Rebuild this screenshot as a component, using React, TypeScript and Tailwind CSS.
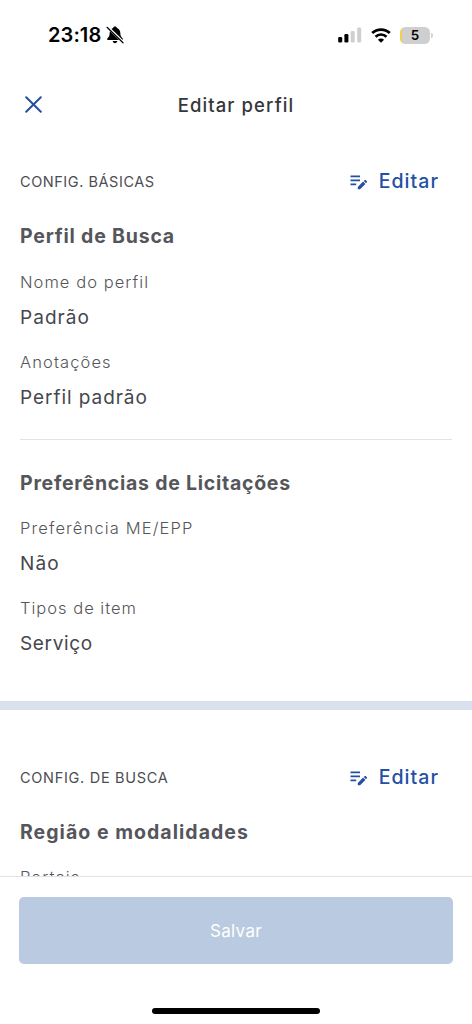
import React from "react";

interface FieldProps {
  label: string;
  value?: string;
  labelClass?: string;
  valueClass?: string;
}

const Field: React.FC<FieldProps> = ({ label, value, labelClass = "", valueClass = "" }) => {
  return (
    <div>
      <p className={`text-[16.5px] leading-6 font-light text-[#55565b] ${labelClass}`}>
        {label}
      </p>
      {value && (
        <p className={`mt-3 text-[19px] leading-6 text-[#46474c] ${valueClass}`}>
          {value}
        </p>
      )}
    </div>
  );
};

// Three lines with a pencil over the lower right corner
const EditIcon: React.FC = () => (
  <svg width="18" height="16" viewBox="0 0 18 16" fill="none">
    <path d="M0.5 2.3H10M0.5 6.3H10M0.5 10.3H6.2" stroke="#2450a4" strokeWidth="1.8" />
    <path d="M7.8 15.2V12.9L13.1 7.6L15.4 9.9L10.1 15.2Z" fill="#2450a4" />
    <path d="M13.8 7L14.7 6.1Q15.2 5.7 15.7 6.1L16.9 7.3Q17.3 7.8 16.9 8.3L16 9.2Z" fill="#2450a4" />
  </svg>
);

const SectionHeader: React.FC<{ title: string; className?: string }> = ({ title, className = "" }) => {
  return (
    <div className="flex h-10 items-center justify-between pr-[13px]">
      <h2 className={`text-[14.5px] text-[#4c4d52] ${className}`}>{title}</h2>
      <button className="flex items-center gap-[11px]">
        <EditIcon />
        <span className="text-[19.5px] font-medium tracking-[1.05px] text-[#2450a4]">
          Editar
        </span>
      </button>
    </div>
  );
};

const StatusBar: React.FC = () => {
  return (
    <div className="flex h-[70px] shrink-0 items-center justify-between pr-[39px] pl-12">
      <div className="flex items-center gap-[5px]">
        <span className="text-[20px] font-semibold tracking-[0.1px] text-black">23:18</span>
        <svg width="18" height="18" viewBox="0 0 18 18">
          <path
            d="M9 0.5C8 0.5 7.3 1.1 7.1 1.9C4.9 2.7 3.7 4.5 3.7 6.8C3.7 9.8 2.8 11 1.5 12.3C0.8 13 1 14 2 14H16C17 14 17.2 13 16.5 12.3C15.2 11 14.3 9.8 14.3 6.8C14.3 4.5 13.1 2.7 10.9 1.9C10.7 1.1 10 0.5 9 0.5ZM6.7 15H11.3C11.1 16.4 10.2 17.2 9 17.2C7.8 17.2 6.9 16.4 6.7 15Z"
            fill="#000"
          />
          <path d="M1.6 1L17.4 16.4" stroke="#fff" strokeWidth="2.6" />
          <path d="M1 1.3L17 16.8" stroke="#000" strokeWidth="1.2" strokeLinecap="round" />
        </svg>
      </div>
      <div className="flex items-center">
        <svg width="24" height="16" viewBox="0 0 24 16">
          <rect x="0.2" y="10" width="4" height="5.5" rx="1.2" fill="#000" />
          <rect x="6.4" y="7" width="4" height="8.5" rx="1.2" fill="#000" />
          <rect x="12.7" y="4" width="4" height="11.5" rx="1.2" fill="#cfcfcf" />
          <rect x="19.2" y="0.5" width="4" height="15" rx="1.2" fill="#cfcfcf" />
        </svg>
        <svg className="ml-[9px]" width="20" height="15" viewBox="0 0 20 15" fill="none">
          <path d="M1.2 5.1C6.1 0.4 13.9 0.4 18.8 5.1" stroke="#000" strokeWidth="2.8" />
          <path d="M4.5 8.7C7.6 5.8 12.4 5.8 15.5 8.7" stroke="#000" strokeWidth="2.6" />
          <path d="M10 14.8L6.9 11.8C8.7 10.2 11.3 10.2 13.1 11.8Z" fill="#000" />
        </svg>
        <div className="ml-[9px] flex h-[17px] w-[30px] items-center justify-center overflow-hidden rounded-[5.5px] bg-[linear-gradient(to_right,#f0cf4e_2.5px,#cfcfcf_2.5px)]">
          <span className="text-[13.5px] font-semibold text-black">5</span>
        </div>
        <div className="ml-px h-[5px] w-[2px] rounded-r-full bg-[#d2d2d2]" />
      </div>
    </div>
  );
};

const App: React.FC = () => {
  return (
    <div className="flex h-[1024px] w-[472px] flex-col overflow-hidden bg-white font-['Inter',sans-serif]">
      <StatusBar />

      <header className="grid h-[70px] shrink-0 grid-cols-[1fr_auto_1fr] items-center px-[25px]">
        <button aria-label="Fechar" className="pb-[2px]">
          <svg width="17" height="17" viewBox="0 0 17 17" fill="none">
            <path d="M1.2 1.2L15.8 15.8M15.8 1.2L1.2 15.8" stroke="#2450a4" strokeWidth="2" strokeLinecap="round" />
          </svg>
        </button>
        <h1 className="pt-px text-[18.5px] font-medium tracking-[1.1px] text-[#36373b]">Editar perfil</h1>
        <span />
      </header>

      <main className="min-h-0 flex-1 overflow-hidden">
        <section className="h-[561px] px-5 pt-[22px]">
          <SectionHeader title="CONFIG. BÁSICAS" className="tracking-[0.55px]" />
          <h3 className="mt-5 text-[19.5px] leading-7 font-bold tracking-[0.8px] text-[#55565b]">
            Perfil de Busca
          </h3>
          <div className="mt-5 flex flex-col gap-5">
            <Field label="Nome do perfil" value="Padrão" labelClass="tracking-[1.05px]" valueClass="tracking-[1.05px]" />
            <Field label="Anotações" value="Perfil padrão" labelClass="tracking-[1.1px]" valueClass="tracking-[0.95px]" />
          </div>
          <hr className="mt-[29px] border-[#dbe6ec]" />
          <h3 className="mt-[29px] text-[19.5px] leading-7 font-bold tracking-[0.74px] text-[#55565b]">
            Preferências de Licitações
          </h3>
          <div className="mt-[19px] flex flex-col gap-5">
            <Field label="Preferência ME/EPP" value="Não" labelClass="tracking-[1.13px]" valueClass="tracking-[1.1px]" />
            <Field label="Tipos de item" value="Serviço" labelClass="tracking-[1px]" valueClass="tracking-[0.65px]" />
          </div>
        </section>

        <div className="h-[9px] bg-[#d9e1ee]" />

        <section className="px-5 pt-12">
          <SectionHeader title="CONFIG. DE BUSCA" className="tracking-[0.7px]" />
          <h3 className="mt-5 text-[19.5px] leading-7 font-bold tracking-[1.03px] text-[#55565b]">
            Região e modalidades
          </h3>
          <div className="mt-[19px]">
            <Field label="Portais" labelClass="tracking-[1.1px]" />
          </div>
        </section>
      </main>

      <footer className="flex h-[148px] shrink-0 flex-col items-center border-t border-[#dde3ea] bg-white px-[19px] pt-5">
        <button className="h-[67px] w-full rounded-[5px] bg-[#bacae0] pt-0.5 text-[17px] tracking-[0.3px] text-white" disabled>
          Salvar
        </button>
        <div className="mt-11 h-[6px] w-[168px] rounded-full bg-black" />
      </footer>
    </div>
  );
};

export default App;
